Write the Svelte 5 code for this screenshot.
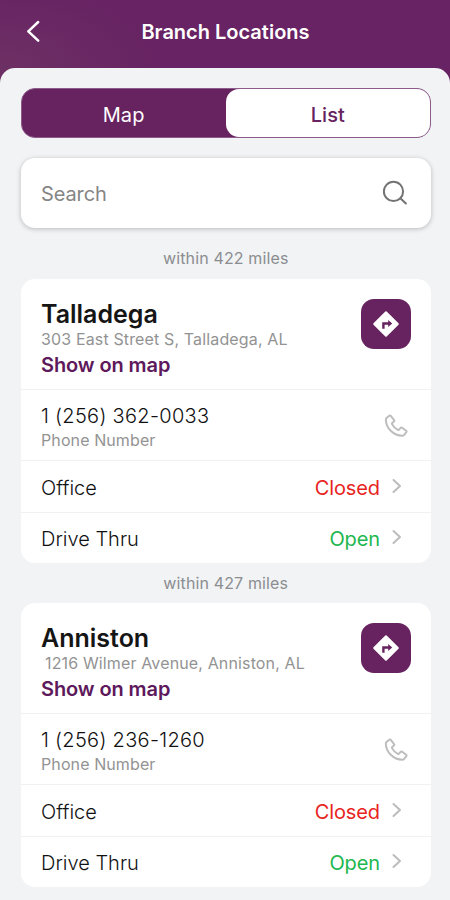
<script>
  const branches = [
    { name: 'Talladega', miles: 422, address: '303 East Street S, Talladega, AL', indent: false, phone: '1 (256) 362-0033' },
    { name: 'Anniston', miles: 427, address: '1216 Wilmer Avenue, Anniston, AL', indent: true, phone: '1 (256) 236-1260' }
  ];
  const services = [
    { label: 'Office', status: 'Closed' },
    { label: 'Drive Thru', status: 'Open' }
  ];
</script>

<div class="app">
  <header>
    <svg class="back" width="16" height="24" viewBox="0 0 16 24" fill="none" stroke="#fff" stroke-width="2.5" stroke-linecap="round" stroke-linejoin="round"><path d="M14.2 2 4.300 11.300l9.900 9.300" /></svg>
    <h1>Branch Locations</h1>
  </header>
  <main>
    <div class="tabs">
      <span class="tab">Map</span>
      <span class="tab active">List</span>
    </div>
    <div class="search">
      <span>Search</span>
      <svg width="26" height="26" viewBox="0 0 26 26" fill="none" stroke="#737373" stroke-width="2" stroke-linecap="round"><circle cx="11.500" cy="11.400" r="9.600" /><path d="m18.600 18.500 5.300 5" /></svg>
    </div>
    {#each branches as branch}
      <p class="distance">within {branch.miles} miles</p>
      <section class="card">
        <div class="summary">
          <div class="details">
            <h2>{branch.name}</h2>
            <span class="address" class:indent={branch.indent}>{branch.address}</span>
            <span class="link">Show on map</span>
          </div>
          <span class="directions">
            <svg width="28" height="28" viewBox="0 0 28 28"><path d="M14 2.200 25.800 14 14 25.800 2.200 14Z" fill="#fff" stroke="#fff" stroke-width="2" stroke-linejoin="round" /><path d="M11.400 18.800v-5.300h5.500" fill="none" stroke="#67235f" stroke-width="2.400" /><path d="m16.200 9.900 4 3.600-4 3.600Z" fill="#67235f" /></svg>
          </span>
        </div>
        <div class="phone">
          <div class="details">
            <span class="number">{branch.phone}</span>
            <span class="caption">Phone Number</span>
          </div>
          <svg width="24" height="24" viewBox="0 0 26 26" fill="none" stroke="#bdbdbd" stroke-width="2.100" stroke-linejoin="round"><path d="M2.700 4.300 5.800 1.800q.9-.6 1.600.3l3.500 4.500q.6.9-.2 1.600L8.900 9.700q-.6.600-.2 1.300c1.400 2.800 3.700 5 6.400 6.300q.8.300 1.300-.3l1.600-2q.7-.8 1.600-.2l4.400 3.300q.8.700.2 1.500l-2.600 3.200q-.6.800-1.700.8C10.200 23.500 2 15.200 2 6q0-1 .7-1.700Z" /></svg>
        </div>
        {#each services as service}
          <div class="service">
            <span>{service.label}</span>
            <span class="status" class:open={service.status === 'Open'}>{service.status}</span>
            <svg width="12" height="16" viewBox="0 0 12 16" fill="none" stroke="#bcbcbc" stroke-width="2" stroke-linecap="round" stroke-linejoin="round"><path d="m2.500 2 6.500 6-6.500 6" /></svg>
          </div>
        {/each}
      </section>
    {/each}
  </main>
</div>

<style>
  :global(body) { margin: 0; background: #f1f3f5; }
  .app {
    width: 450px;
    height: 900px;
    overflow: hidden;
    box-sizing: border-box;
    font-family: Inter, "Liberation Sans", sans-serif;
    background: #672363 radial-gradient(ellipse 160px 85px at 0 68px, #6d3064, #672363) no-repeat;
    color: #111;
  }
  header {
    display: flex;
    align-items: center;
    height: 68px;
    padding: 0 24px 5px;
    box-sizing: border-box;
  }
  .back { flex: none; }
  h1 {
    flex: 1;
    margin: 0 15px 0 0;
    text-align: center;
    color: #fff;
    font-size: 20px;
    font-weight: 600;
    line-height: 24px;
  }
  main {
    height: 832px;
    box-sizing: border-box;
    padding: 20px 19px 0 20.500px;
    border-radius: 15px 15px 0 0;
    background: #f1f3f5;
  }
  .tabs {
    display: flex;
    height: 50px;
    box-sizing: border-box;
    border: 1px solid #8d5b89;
    border-radius: 14px;
    background: #67235f;
  }
  .tab {
    flex: 1;
    display: flex;
    align-items: center;
    justify-content: center;
    padding-top: 3px;
    color: #fff;
    font-size: 20px;
    letter-spacing: .1px;
  }
  .tab.active {
    border-radius: 13px;
    background: #fff;
    color: #67235f;
    font-weight: 500;
  }
  .search {
    display: flex;
    align-items: center;
    justify-content: space-between;
    height: 70px;
    margin-top: 20px;
    padding: 0 23px 0 20.500px;
    box-sizing: border-box;
    border-radius: 14px;
    background: #fff;
    box-shadow: 0 1px 5px rgba(0, 0, 0, .24);
    color: #858585;
    font-size: 20px;
  }
  .search span { padding-top: 2px; letter-spacing: -.1px; }
  .distance {
    margin: 0;
    height: 40px;
    line-height: 40px;
    text-align: center;
    color: #8b8d90;
    font-size: 16px;
    letter-spacing: .13px;
  }
  .search + .distance { height: 51px; line-height: 61px; }
  .card {
    display: flex;
    flex-direction: column;
    height: 284px;
    border-radius: 14px;
    background: #fff;
  }
  .summary, .phone, .service {
    display: flex;
    box-sizing: border-box;
    padding: 0 20.500px;
  }
  .summary { height: 111px; justify-content: space-between; border-bottom: 1px solid #f0f1f2; }
  .phone { height: 71px; justify-content: space-between; border-bottom: 1px solid #f0f1f2; }
  .phone svg { margin: 23.500px 3px 0 0; }
  .details { display: flex; flex-direction: column; align-items: flex-start; white-space: nowrap; }
  h2 { margin: 20px 0 0; font-size: 25px; font-weight: 600; line-height: 30px; color: #151515; }
  .address { font-size: 16px; line-height: 20px; letter-spacing: .14px; color: #939393; }
  .indent { padding-left: 4px; }
  .link { margin-top: 3px; font-size: 20px; font-weight: 600; line-height: 26px; letter-spacing: -.1px; color: #5d195b; }
  .directions {
    display: flex;
    align-items: center;
    justify-content: center;
    width: 50px;
    height: 50px;
    margin-top: 20px;
    border-radius: 13px;
    background: #67235f;
  }
  .number { margin-top: 13px; font-size: 20px; font-weight: 350; line-height: 26px; letter-spacing: .3px; }
  .caption { font-size: 16px; line-height: 22px; letter-spacing: .1px; color: #939393; }
  .service { height: 51px; align-items: center; font-size: 20px; font-weight: 350; }
  .service:not(:last-child) { height: 52px; border-bottom: 1px solid #f0f1f2; }
  .service:last-child { height: 50px; }
  .service span { padding-top: 2px; }
  .service svg { margin: 0 7.500px 2px 10px; }
  .service .status { margin-left: auto; margin-right: 1px; color: #e8241f; font-weight: 400; letter-spacing: -.1px; }
  .service .status.open { color: #20b750; }
</style>
